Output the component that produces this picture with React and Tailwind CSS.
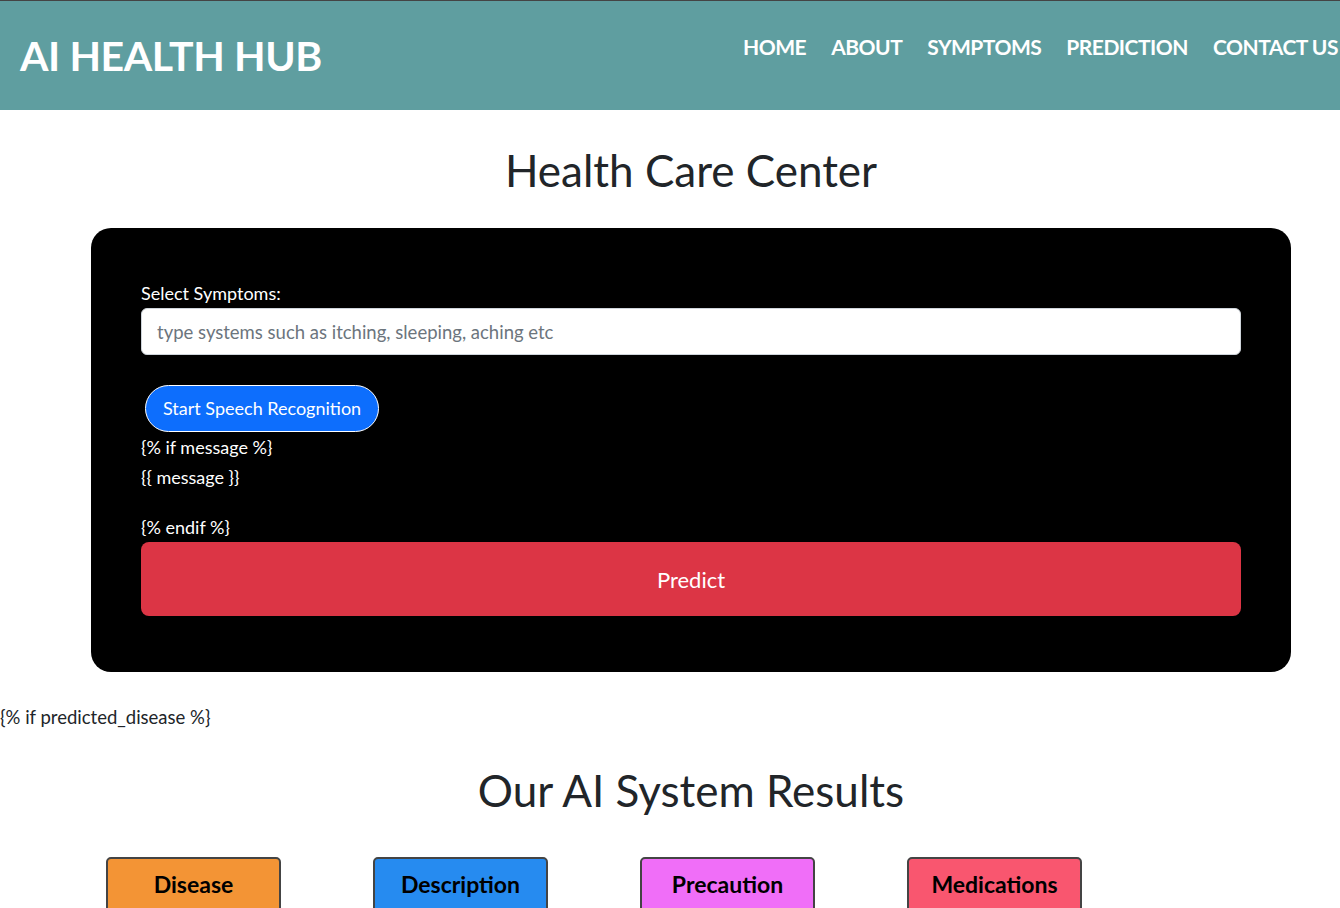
const font = { fontFamily: 'Lato, "Open Sans", sans-serif' };

const navItems = ['HOME', 'ABOUT', 'SYMPTOMS', 'PREDICTION', 'CONTACT US'];

const resultButtons = [
  { label: 'Disease', cls: 'bg-[#f39435]' },
  { label: 'Description', cls: 'bg-[#268bf0]' },
  { label: 'Precaution', cls: 'bg-[#f06ef8]' },
  { label: 'Medications', cls: 'bg-[#f9566f]' },
];

export default function App() {
  return (
    <div className="min-h-screen bg-white text-[#212529] overflow-hidden" style={font}>
      {/* Navbar */}
      <header className="h-[110px] bg-[#5f9ea0] border-t border-[#444] flex items-start justify-between">
        <h1 className="pl-[20px] pt-[32px] text-[41px] font-bold text-white leading-[46px] tracking-[-0.4px]">
          AI HEALTH HUB
        </h1>
        <nav className="flex gap-[25px] pt-[32px] pr-[2px]">
          {navItems.map((item) => (
            <a key={item} className="text-[21px] font-bold text-white leading-[28px] tracking-[-0.5px] whitespace-nowrap">
              {item}
            </a>
          ))}
        </nav>
      </header>

      <h2 className="w-[1382px] text-center text-[44px] leading-[50px] mt-[35px]">Health Care Center</h2>

      <div className="mx-[91px] mt-[33px] w-[1200px] bg-black rounded-[20px] px-[50px] pt-[53px] pb-[56px]">
        <label className="block text-white text-[18px] leading-[24px] mb-[3px]">Select Symptoms:</label>
        <input
          type="text"
          placeholder="type systems such as itching, sleeping, aching etc"
          className="w-full h-[47px] bg-white rounded-[6px] border border-[#ced4da] px-[15px] text-[18.5px] placeholder:text-[#6c757d] outline-none"
          style={font}
        />
        <div className="mt-[30px] ml-[4px]">
          <button className="h-[47px] px-[17px] rounded-full bg-[#0d6efd] border border-white text-white text-[18px]">
            Start Speech Recognition
          </button>
        </div>
        <div className="text-white text-[18px] leading-[30px]">
          <p>{'{% if message %}'}</p>
          <p>{'{{ message }}'}</p>
          <p className="mt-[20px]">{'{% endif %}'}</p>
        </div>
        <button className="w-full h-[74px] bg-[#dc3545] rounded-[8px] text-white text-[22px]">Predict</button>
      </div>

      <p className="mt-[32px] text-[18.5px] leading-[26px]">{'{% if predicted_disease %}'}</p>

      <h2 className="w-[1382px] text-center text-[44px] leading-[54px] mt-[33px]">Our AI System Results</h2>

      <div className="flex gap-[92px] pl-[106px] mt-[40px]">
        {resultButtons.map((b) => (
          <button
            key={b.label}
            className={`${b.cls} w-[175px] h-[60px] border-2 border-[#444] rounded-[5px] text-black text-[23px] font-bold pb-[6px]`}
          >
            {b.label}
          </button>
        ))}
      </div>
    </div>
  );
}
